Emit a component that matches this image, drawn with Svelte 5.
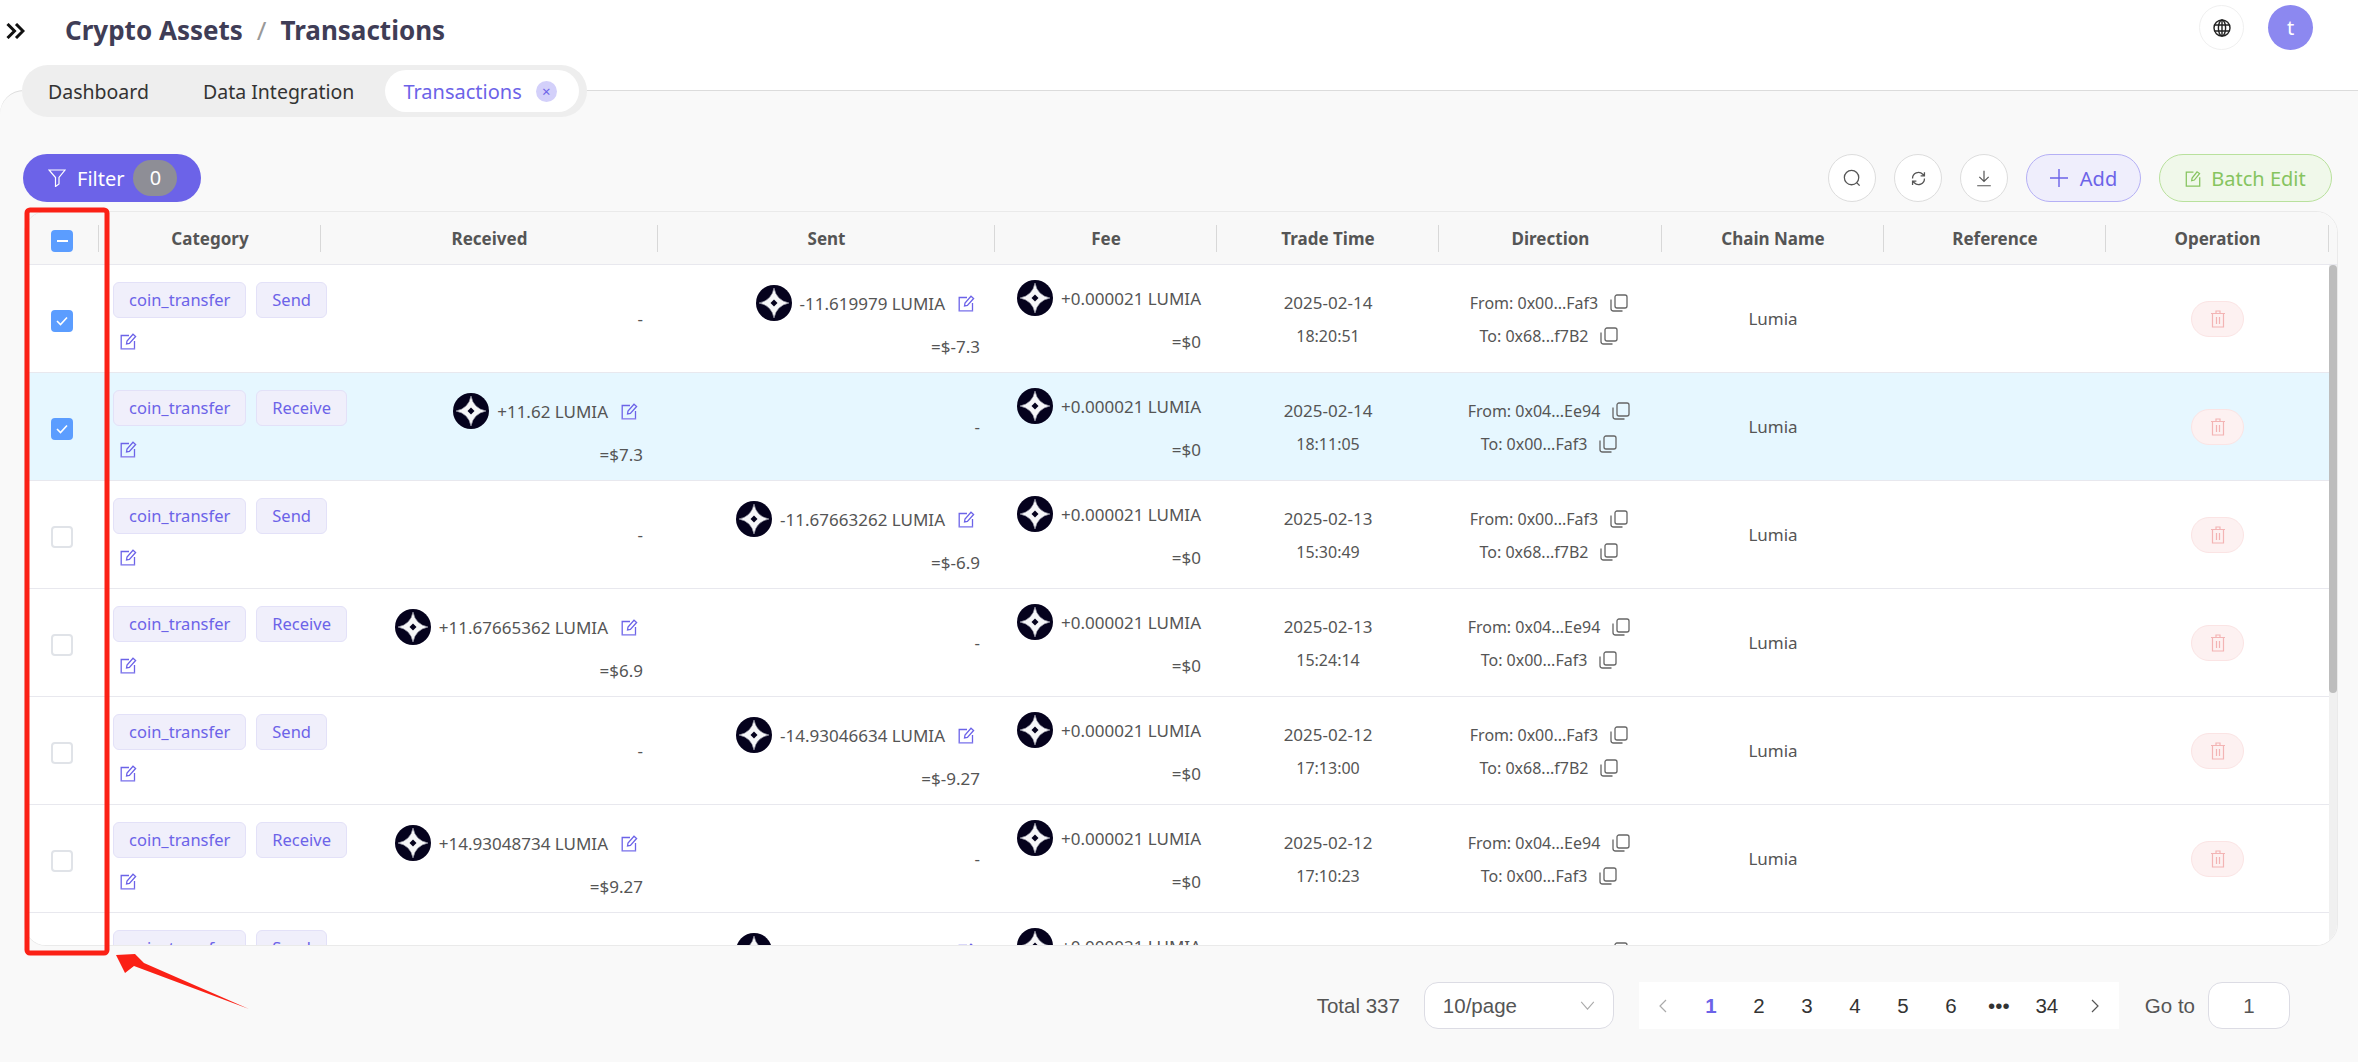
<script>
	const columns = ['Category', 'Received', 'Sent', 'Fee', 'Trade Time', 'Direction', 'Chain Name', 'Reference', 'Operation'];

	const rows = [
		{ type: 'Send', received: null, sent: ['-11.619979 LUMIA', '=$-7.3'], date: '2025-02-14', time: '18:20:51', from: '0x00...Faf3', to: '0x68...f7B2', checked: true },
		{ type: 'Receive', received: ['+11.62 LUMIA', '=$7.3'], sent: null, date: '2025-02-14', time: '18:11:05', from: '0x04...Ee94', to: '0x00...Faf3', checked: true, active: true },
		{ type: 'Send', received: null, sent: ['-11.67663262 LUMIA', '=$-6.9'], date: '2025-02-13', time: '15:30:49', from: '0x00...Faf3', to: '0x68...f7B2' },
		{ type: 'Receive', received: ['+11.67665362 LUMIA', '=$6.9'], sent: null, date: '2025-02-13', time: '15:24:14', from: '0x04...Ee94', to: '0x00...Faf3' },
		{ type: 'Send', received: null, sent: ['-14.93046634 LUMIA', '=$-9.27'], date: '2025-02-12', time: '17:13:00', from: '0x00...Faf3', to: '0x68...f7B2' },
		{ type: 'Receive', received: ['+14.93048734 LUMIA', '=$9.27'], sent: null, date: '2025-02-12', time: '17:10:23', from: '0x04...Ee94', to: '0x00...Faf3' },
		{ type: 'Send', received: null, sent: ['-16.48188688 LUMIA', '=$-9.9'], date: '2025-02-11', time: '16:02:37', from: '0x00...Faf3', to: '0x68...f7B2' }
	];

	const pages = ['1', '2', '3', '4', '5', '6', '•••', '34'];
</script>

{#snippet logo()}
	<svg class="logo" viewBox="0 0 36 36">
		<circle cx="18" cy="18" r="18" fill="#05021d" />
		<path d="M18 3 Q20.5 15.5 33 18 Q20.5 20.5 18 33 Q15.5 20.5 3 18 Q15.5 15.5 18 3Z" fill="#f6f6f8" stroke="#8d8d9c" stroke-width="0.7" />
		<path d="M18 14.5 L21.5 18 L18 21.5 L14.5 18Z" fill="#05021d" />
	</svg>
{/snippet}

{#snippet editIcon()}
	<svg class="edit" viewBox="0 0 17 17" fill="none" stroke="#6c63e8" stroke-width="1.3">
		<path d="M9 2.5H1.2V15.8H14.5V8" />
		<path d="M6.5 11 L7 8 L13 1.2 L15.6 3.5 L9.4 10.4Z" />
		<path d="M1 16.4H15" stroke="#b9b5f5" />
	</svg>
{/snippet}

{#snippet copyIcon()}
	<svg class="copy" viewBox="0 0 19 18" fill="none" stroke="#666" stroke-width="1.3">
		<rect x="6" y="1" width="12" height="13" rx="2" />
		<path d="M2 5.5V14.5Q2 17 4.5 17H13.5" />
	</svg>
{/snippet}

{#snippet amount(value, editable, cls)}
	<div class="amount {cls}">
		<div class="amount-top">
			{@render logo()}
			<span>{value[0]}</span>
			{#if editable}{@render editIcon()}{/if}
		</div>
		<div class="amount-usd">{value[1]}</div>
	</div>
{/snippet}

<div class="page">
	<header class="topbar">
		<svg class="expand" viewBox="0 0 19 16" fill="none" stroke="#111" stroke-width="3">
			<path d="M1.5 1L8.5 8L1.5 15" />
			<path d="M10 1L17 8L10 15" />
		</svg>
		<div class="crumbs">
			<span>Crypto Assets</span>
			<span class="slash">/</span>
			<span>Transactions</span>
		</div>
		<div class="top-right">
			<button class="globe" aria-label="Language">
				<svg viewBox="0 0 18 18" width="18" height="18" fill="none" stroke="#222" stroke-width="1.4">
					<circle cx="9" cy="9" r="8" />
					<ellipse cx="9" cy="9" rx="3.6" ry="8" />
					<path d="M1.6 6H16.4M1.6 12H16.4M9 1V17" />
				</svg>
			</button>
			<div class="avatar">t</div>
		</div>
	</header>

	<div class="tabstrip">
		<div class="tabs">
			<div class="tab">Dashboard</div>
			<div class="tab">Data Integration</div>
			<div class="tab current">
				Transactions
				<span class="tab-close">×</span>
			</div>
		</div>
	</div>

	<main class="content">
		<div class="toolbar">
			<button class="filter">
				<svg viewBox="0 0 18 18" width="18" height="18" fill="none" stroke="#fff" stroke-width="1.2">
					<path d="M1 1H17L11 8.5V15L7.5 17.5V8.5Z" />
				</svg>
				Filter
				<span class="filter-count">0</span>
			</button>
			<div class="actions">
				<button class="round" aria-label="Search">
					<svg viewBox="0 0 20 20" width="18" height="18" fill="none" stroke="#555" stroke-width="1.4">
						<circle cx="9.5" cy="9.5" r="8" />
						<path d="M15 15L18.5 18.5" />
					</svg>
				</button>
				<button class="round" aria-label="Refresh">
					<svg viewBox="0 0 20 20" width="17" height="17" fill="none" stroke="#555" stroke-width="1.5">
						<path d="M3 10A7 7 0 0 1 15 5L17 7M17 2.5V7H12.5" />
						<path d="M17 10A7 7 0 0 1 5 15L3 13M3 17.5V13H7.5" />
					</svg>
				</button>
				<button class="round" aria-label="Download">
					<svg viewBox="0 0 18 20" width="16" height="17" fill="none" stroke="#555" stroke-width="1.4">
						<path d="M9 1V13M3.5 8L9 13.5L14.5 8M1 18.5H17" />
					</svg>
				</button>
				<button class="pill add">
					<svg viewBox="0 0 18 18" width="18" height="18" fill="none" stroke="#6c63e8" stroke-width="1.4">
						<path d="M9 0V18M0 9H18" />
					</svg>
					Add
				</button>
				<button class="pill batch">
					<svg viewBox="0 0 17 19" width="16" height="17" fill="none" stroke="#86c45f" stroke-width="1.4">
						<path d="M9 2.5H1V18H16V8" />
						<path d="M7 12 L7.5 9 L13 2 L15.8 4 L10 11.2Z" />
					</svg>
					Batch Edit
				</button>
			</div>
		</div>

		<div class="table">
			<div class="row head">
				<div class="cell check-cell">
					<span class="check on"><i class="dash"></i></span>
				</div>
				{#each columns as col}
					<div class="cell">{col}</div>
				{/each}
			</div>
			<div class="body">
				<div class="rows">
					{#each rows as row}
						<div class="row" class:active={row.active}>
							<div class="cell check-cell">
								<span class="check" class:on={row.checked}>
									{#if row.checked}
										<svg viewBox="0 0 12 10" width="12" height="10" fill="none" stroke="#fff" stroke-width="1.6">
											<path d="M1 5L4.5 8.5L11 1.5" />
										</svg>
									{/if}
								</span>
							</div>
							<div class="cell category">
								<div class="tags">
									<span class="tag">coin_transfer</span>
									<span class="tag">{row.type}</span>
								</div>
								{@render editIcon()}
							</div>
							<div class="cell money">
								{#if row.received}
									{@render amount(row.received, true, '')}
								{:else}
									<span class="none">-</span>
								{/if}
							</div>
							<div class="cell money">
								{#if row.sent}
									{@render amount(row.sent, true, '')}
								{:else}
									<span class="none">-</span>
								{/if}
							</div>
							<div class="cell money fee-cell">
								{@render amount(['+0.000021 LUMIA', '=$0'], false, 'fee')}
							</div>
							<div class="cell stack when">
								<div>{row.date}</div>
								<div class="time">{row.time}</div>
							</div>
							<div class="cell stack direction">
								<div class="addr">From: {row.from} {@render copyIcon()}</div>
								<div class="addr">To: {row.to} {@render copyIcon()}</div>
							</div>
							<div class="cell">Lumia</div>
							<div class="cell"></div>
							<div class="cell">
								<button class="delete" aria-label="Delete">
									<svg viewBox="0 0 14 18" width="14" height="18" fill="none" stroke="#f3b4b4" stroke-width="1.2">
										<path d="M0 3.5H14M5 3V1H9V3M1.5 3.5V17H12.5V3.5M5.5 7V14M8.5 7V14" />
									</svg>
								</button>
							</div>
						</div>
					{/each}
				</div>
				<div class="track"><div class="thumb"></div></div>
			</div>
		</div>

		<footer class="pager-bar">
			<span>Total 337</span>
			<div class="select">
				10/page
				<svg viewBox="0 0 16 10" width="15" height="9" fill="none" stroke="#aaa" stroke-width="1.2">
					<path d="M1 1L8 9L15 1" />
				</svg>
			</div>
			<div class="pager">
				<div class="page-item">
					<svg viewBox="0 0 8 14" width="8" height="14" fill="none" stroke="#aaa" stroke-width="1.2"><path d="M7 1L1 7L7 13" /></svg>
				</div>
				{#each pages as p, i}
					<div class="page-item" class:current={i === 0}>{p}</div>
				{/each}
				<div class="page-item">
					<svg viewBox="0 0 8 14" width="8" height="14" fill="none" stroke="#555" stroke-width="1.2"><path d="M1 1L7 7L1 13" /></svg>
				</div>
			</div>
			<span class="goto">Go to</span>
			<div class="goto-input">1</div>
		</footer>
	</main>

	<svg class="note" viewBox="0 0 2358 1062" fill="none">
		<rect x="27" y="210" width="80" height="743" rx="3" stroke="#fb2116" stroke-width="5" />
		<path d="M116 955L135 954L144 963L249 1009L134 966L125 973Z" fill="#fb2116" />
	</svg>
</div>

<style>
	:global(body) {
		margin: 0;
		font-family: 'Noto Sans', 'Liberation Sans', sans-serif;
		color: #555;
	}
	button {
		font: inherit;
		cursor: pointer;
	}
	.page {
		position: relative;
		width: 2358px;
		height: 1062px;
		overflow: hidden;
		background: #fff;
	}
	.topbar {
		display: flex;
		align-items: center;
		height: 65px;
		padding: 0 45px 10px 6px;
		box-sizing: border-box;
	}
	.expand {
		width: 19px;
		height: 16px;
		margin-top: 7px;
	}
	.crumbs {
		display: flex;
		gap: 14px;
		margin: 5px 0 0 40px;
		font-size: 26px;
		font-weight: 700;
		color: #3f3d56;
	}
	.slash {
		font-weight: 400;
		color: #999;
	}
	.top-right {
		display: flex;
		align-items: center;
		gap: 24px;
		margin-left: auto;
	}
	.globe {
		display: flex;
		align-items: center;
		justify-content: center;
		width: 45px;
		height: 45px;
		padding: 0;
		background: #fff;
		border: 1px solid #f0f0f0;
		border-radius: 50%;
	}
	.avatar {
		width: 45px;
		height: 45px;
		line-height: 45px;
		text-align: center;
		border-radius: 50%;
		background: #8c88f0;
		color: #fff;
		font-size: 20px;
	}
	.tabstrip {
		position: relative;
		z-index: 1;
		height: 25px;
		padding-left: 22px;
	}
	.tabs {
		display: inline-flex;
		align-items: center;
		height: 52px;
		padding-right: 8px;
		border-radius: 26px;
		background: #eeeeee;
		font-size: 19.5px;
		color: #333;
	}
	.tab {
		display: flex;
		align-items: center;
		height: 42px;
		padding: 0 26px;
	}
	.tab + .tab {
		margin-left: 2px;
	}
	.tab.current {
		gap: 14px;
		margin-left: 5px;
		padding: 0 22px 0 18px;
		border-radius: 21px;
		background: #fff;
		color: #6c63e8;
		font-size: 20px;
	}
	.tab-close {
		width: 21px;
		height: 21px;
		line-height: 20px;
		text-align: center;
		border-radius: 50%;
		background: #d3d0fa;
		font-size: 15px;
	}
	.content {
		height: 972px;
		box-sizing: border-box;
		padding: 63px 20px 0 24px;
		background: #f9f9f9;
		border-top: 1px solid #dcdcdc;
		border-top-left-radius: 24px;
	}
	.toolbar {
		display: flex;
		justify-content: space-between;
		height: 48px;
		margin-bottom: 9px;
	}
	.filter {
		display: flex;
		align-items: center;
		width: 178px;
		height: 48px;
		margin-left: -1px;
		padding: 0 8px 0 25px;
		border: none;
		border-radius: 24px;
		background: #6c63e8;
		color: #fff;
		font-size: 20px;
		gap: 11px;
	}
	.filter-count {
		width: 44px;
		height: 36px;
		margin-left: -2px;
		line-height: 35px;
		border-radius: 18px;
		background: #8e8e96;
		text-align: center;
	}
	.actions {
		display: flex;
		gap: 18px;
		margin-right: 6px;
	}
	.round {
		display: flex;
		align-items: center;
		justify-content: center;
		width: 48px;
		height: 48px;
		padding: 0;
		background: #fff;
		border: 1px solid #ddd;
		border-radius: 50%;
	}
	.pill {
		display: flex;
		align-items: center;
		justify-content: center;
		gap: 12px;
		height: 48px;
		border-radius: 24px;
		font-size: 20px;
	}
	.add {
		width: 115px;
		background: #efeefc;
		border: 1px solid #b5b0f5;
		color: #6c63e8;
	}
	.batch {
		width: 173px;
		background: #f0f8ea;
		border: 1px solid #b9e19d;
		color: #86c45f;
		gap: 10px;
	}
	.table {
		display: flex;
		flex-direction: column;
		width: 2314px;
		height: 735px;
		box-sizing: border-box;
		background: #fff;
		border: 1px solid #eaeaea;
		border-radius: 22px;
		overflow: hidden;
	}
	.row {
		display: grid;
		grid-template-columns: 74px 222px 337px 337px 222px 222px 223px 222px 222px 223px;
		height: 108px;
		box-sizing: border-box;
		border-bottom: 1px solid #e8e8ee;
		background: #fff;
		font-size: 17px;
	}
	.row.active {
		background: #e6f7ff;
	}
	.cell {
		position: relative;
		display: flex;
		align-items: center;
		justify-content: center;
		min-width: 0;
	}
	.check-cell {
		padding-top: 5px;
		box-sizing: border-box;
	}
	.head {
		flex: none;
		height: 53px;
		background: #f8f8f8;
		font-weight: 700;
		color: #555;
	}
	.head .cell::after {
		content: '';
		position: absolute;
		right: 0;
		top: 13px;
		height: 27px;
		width: 1px;
		background: #d8d8d8;
	}
	.body {
		display: flex;
		flex: 1;
		min-height: 0;
	}
	.rows {
		flex: 1;
		min-width: 0;
		overflow: hidden;
	}
	.track {
		flex: none;
		width: 8px;
		background: #f0f0f0;
	}
	.thumb {
		height: 428px;
		border-radius: 4px;
		background: #bdbdbd;
	}
	.check {
		display: flex;
		align-items: center;
		justify-content: center;
		width: 22px;
		height: 22px;
		box-sizing: border-box;
		border: 2px solid #e0e3e8;
		border-radius: 4px;
		background: #fff;
	}
	.check.on {
		border-color: #5b9dff;
		background: #5b9dff;
	}
	.dash {
		width: 11px;
		height: 2px;
		background: #fff;
	}
	.category {
		flex-direction: column;
		align-items: flex-start;
		justify-content: flex-start;
		padding: 17px 0 0 14px;
	}
	.tags {
		display: flex;
		gap: 10px;
		white-space: nowrap;
		font-size: 16.5px;
	}
	.tag {
		height: 36px;
		line-height: 33px;
		box-sizing: border-box;
		padding: 0 15px;
		border: 1px solid #e3e1f8;
		border-radius: 6px;
		background: #f0effb;
		color: #6c63e8;
	}
	.edit {
		flex: none;
		width: 17px;
		height: 17px;
	}
	.category .edit {
		margin: 15px 0 0 7px;
	}
	.money {
		justify-content: flex-end;
		padding-right: 15px;
	}
	.fee-cell {
		padding-right: 16px;
	}
	.amount {
		align-self: flex-start;
		display: flex;
		flex-direction: column;
		align-items: flex-end;
		padding-top: 20px;
	}
	.amount.fee {
		padding-top: 15px;
	}
	.amount-top {
		display: flex;
		align-items: center;
		gap: 8px;
		white-space: nowrap;
	}
	.amount-top .edit {
		margin: 0 5px 0 5px;
	}
	.amount-usd {
		margin-top: 15px;
		line-height: 22px;
	}
	.logo {
		flex: none;
		width: 36px;
		height: 36px;
	}
	.stack {
		flex-direction: column;
		gap: 11px;
		line-height: 22px;
		font-size: 16px;
	}
	.when {
		box-sizing: border-box;
		padding-top: 1px;
		font-size: 17px;
	}
	.time {
		font-size: 16px;
	}
	.direction {
		box-sizing: border-box;
		padding: 1px 3px 0 0;
	}
	.addr {
		display: flex;
		align-items: center;
		gap: 11px;
		white-space: nowrap;
	}
	.copy {
		flex: none;
		width: 19px;
		height: 18px;
	}
	.delete {
		display: flex;
		align-items: center;
		justify-content: center;
		width: 53px;
		height: 36px;
		padding: 0;
		background: #fdf1f1;
		border: 1px solid #fbe4e4;
		border-radius: 18px;
	}
	.pager-bar {
		display: flex;
		align-items: center;
		justify-content: flex-end;
		height: 47px;
		margin-top: 36px;
		margin-right: 48px;
		font-family: 'Liberation Sans', sans-serif;
		font-size: 20.5px;
	}
	.select {
		display: flex;
		align-items: center;
		justify-content: space-between;
		width: 190px;
		height: 47px;
		margin: 0 25px 0 24px;
		padding: 0 18px;
		box-sizing: border-box;
		border: 1px solid #dcdce4;
		border-radius: 14px;
		background: #fff;
	}
	.pager {
		display: flex;
		background: #fff;
		color: #333;
	}
	.page-item {
		display: flex;
		align-items: center;
		justify-content: center;
		width: 48px;
		height: 47px;
	}
	.page-item.current {
		color: #6c63e8;
		font-weight: 700;
	}
	.goto {
		margin: 0 13px 0 26px;
	}
	.goto-input {
		width: 82px;
		height: 47px;
		line-height: 45px;
		box-sizing: border-box;
		text-align: center;
		border: 1px solid #dcdce4;
		border-radius: 14px;
		background: #fff;
	}
	.note {
		position: absolute;
		left: 0;
		top: 0;
		width: 2358px;
		height: 1062px;
		pointer-events: none;
		z-index: 2;
	}
</style>
